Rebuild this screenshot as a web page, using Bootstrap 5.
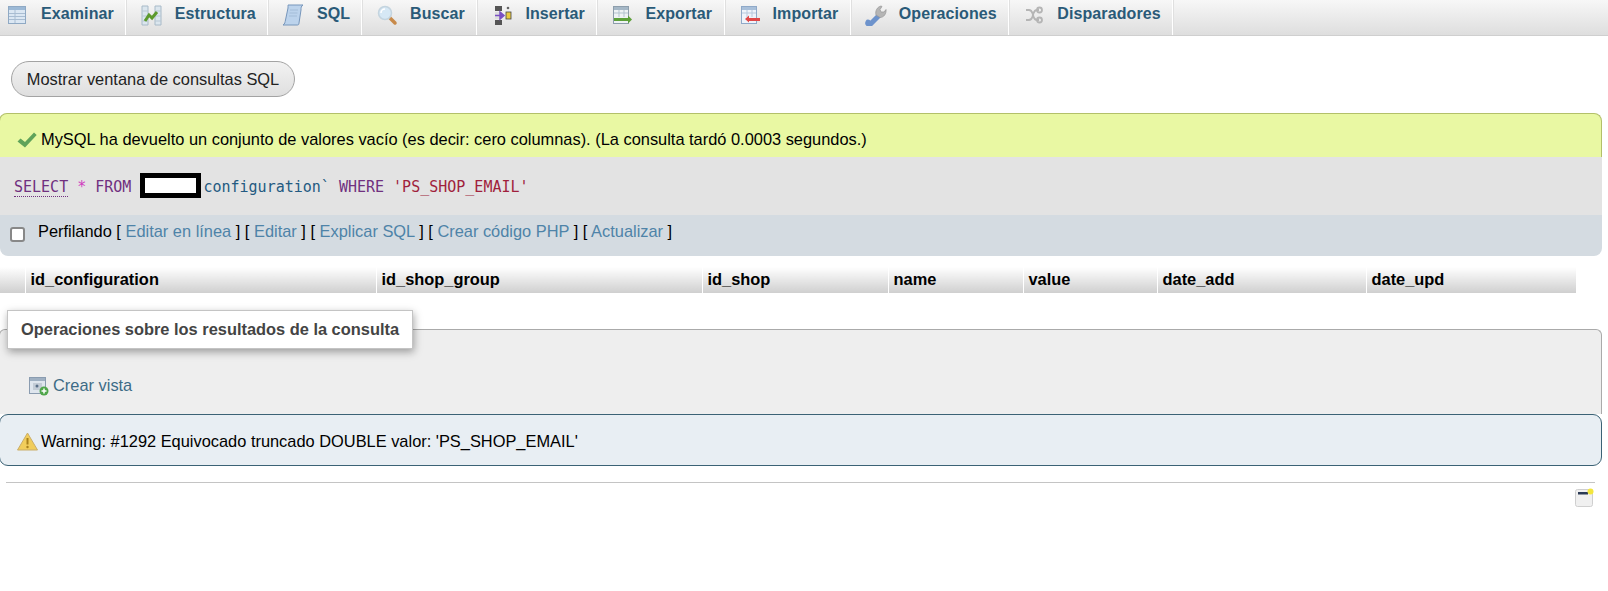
<!DOCTYPE html>
<html lang="es">
<head>
<meta charset="utf-8">
<title>phpMyAdmin</title>
<link rel="stylesheet" href="https://cdn.jsdelivr.net/npm/bootstrap@5.3.0/dist/css/bootstrap.min.css">
<style>
html,body{background:#fff;overflow:hidden}
body{font-family:"Liberation Sans",Arial,sans-serif;font-size:16.4px;color:#000;line-height:1.2}
.tabbar{height:36px;background:linear-gradient(#f7f7f7,#dedede);border-bottom:1px solid #cfcfcf}
.tabitem{height:35px;padding:0 11px 7px 14px;gap:13px;border-right:1px solid #fff;box-shadow:1px 0 0 #e0e0e0;color:#2a5a78;font-weight:700;font-size:16px;text-decoration:none;letter-spacing:.1px}
.tabitem:nth-child(n+4){gap:12px;padding-right:11.5px}
.tabitem:first-child{margin-left:-8px}
.tabitem svg{width:22px;height:22px;flex:none;margin-top:2px}
.sqlbtn{margin:25px 0 16px 11px;width:284px;height:36px;padding:0;border:1px solid #a3a3a3;border-radius:18px;background:linear-gradient(#f2f2f2,#dfdfdf);color:#222;font-size:16.4px}
.msgok{height:44px;margin-left:-1px;padding:9px 17px 0;gap:4px;background:#e9f8a3;border:1px solid #b3c06a;border-bottom:0;border-radius:8px 8px 0 0;margin-right:6px}
.sqlrow{height:58px;background:#e3e3e3;margin-right:6px;padding:3px 0 0 14px;font:15px/55px "DejaVu Sans Mono","Liberation Mono",monospace;white-space:pre;color:#235a81}
.kw{color:#70307f}
.kwsel{color:#70307f;border-bottom:1px dotted #70307f}
.star{color:#d040c0}
.str{color:#a01f3c}
.maskbox{width:61px;height:25px;background:#fff;border:5px solid #000;margin-right:2px;vertical-align:-6px}
.toolrow{height:41px;background:#d4dbe1;margin-right:6px;padding:0 0 8px 10px;border-radius:0 0 8px 8px;gap:13px}
.toolrow a{color:#4e83a8;text-decoration:none}
.toolrow .form-check-input{width:15px;height:15px;margin:5px 0 0;border:2px solid #888;border-radius:3px;flex:none}
.headgrid{width:1576px;margin:11px 0 0;table-layout:fixed;border-collapse:collapse}
.headgrid th{height:26px;padding:0 0 1px 5px;border:0;border-left:1px solid #fff;background:linear-gradient(#fff,#cfcfcf);font-size:16.4px;font-weight:700;color:#000;box-shadow:none;vertical-align:middle}
.headgrid th:first-child{border-left:0}
.opsbox{margin:36px 6px 0 -1px;height:85px;background:#eee;border:1px solid #aaa;border-bottom:0;border-radius:6px 6px 0 0;position:relative;padding:46px 0 0 29px;gap:4px;color:#235a81}
.opslegend{position:absolute;left:7px;top:-20px;width:406px;height:39px;background:#fff;border:1px solid #c4c4c4;color:#444;font-weight:700;padding:1px 0 0 13px;box-shadow:1px 3px 8px rgba(0,0,0,.35)}
.opsbox a{color:#3d6b86;text-decoration:none}
.msgwarn{height:52px;margin:0 6px 0 -1px;padding:3px 17px 0;gap:3px;background:#e8eef3;border:1px solid #3b6275;border-radius:9px}
.rule{margin:16px 13px 0 6px;height:1px;background:#c4c4c4}
.noteic{margin:5px 14px 0 0}
</style>
</head>
<body>
<nav class="tabbar d-flex">
  <a class="tabitem d-flex align-items-center" href="#"><svg viewBox="0 0 22 22"><rect x="2.500" y="2.500" width="17" height="17" fill="#dbe7f3" stroke="#8fa9c4"/><rect x="3" y="3" width="16" height="3" fill="#9cb9d6"/><path d="M3 9.500h16M3 12.500h16M3 15.500h16M9 6v13" stroke="#a9bdd2"/></svg>Examinar</a>
  <a class="tabitem d-flex align-items-center" href="#"><svg viewBox="0 0 22 22"><path d="M2 2h6v19H2zM15 2h6v19h-6z" fill="#dbe6ee" stroke="#a8bac8"/><path d="M2 7h6M2 12h6M2 17h6M15 7h6M15 12h6M15 17h6" stroke="#b9c8d4"/><path d="M5 17l4-6 3 3 5-6" fill="none" stroke="#5c9a2d" stroke-width="3"/></svg>Estructura</a>
  <a class="tabitem d-flex align-items-center" href="#"><svg viewBox="0 0 22 22"><path d="M6 1h15c-2 1-2 3-2 5l-2 13c0 2-1 2-2 2H1c2-1 2-3 2.500-5L6 4c0-2 0-3 0-3z" fill="#bcd3ec" stroke="#7796bb"/><path d="M8 6h8M7.500 9h8M7 12h8" stroke="#a4bdd8"/></svg>SQL</a>
  <a class="tabitem d-flex align-items-center" href="#"><svg viewBox="0 0 22 22"><path d="M13 13l6 6" stroke="#c88a4a" stroke-width="3.500" stroke-linecap="round"/><circle cx="9" cy="9" r="6.500" fill="#d6e8f5" stroke="#c4d4df" stroke-width="1.500"/><path d="M5 9a4 4 0 0 1 4-4" stroke="#fff" fill="none" stroke-width="1.500"/></svg>Buscar</a>
  <a class="tabitem d-flex align-items-center" href="#"><svg viewBox="0 0 22 22"><path d="M4 2h7v5H4zM4 16h7v5H4z" fill="#555"/><path d="M4 8h7v7H4z" fill="#ddd"/><path d="M4 11.500h8M9 8l4 3.500L9 15z" fill="#7a4fc4" stroke="#7a4fc4" stroke-width="1.500"/><rect x="15" y="8" width="5" height="7" fill="#e8c840" stroke="#444" stroke-width=".8"/><circle cx="17" cy="4" r="1.300" fill="#666"/></svg>Insertar</a>
  <a class="tabitem d-flex align-items-center" href="#"><svg viewBox="0 0 22 22"><rect x="2.500" y="2.500" width="15" height="17" fill="#eef2f5" stroke="#8d9eac"/><rect x="3" y="3" width="14" height="3" fill="#a5b7c6"/><path d="M3 9h14M8 6v7M13 6v7" stroke="#b3c3cf"/><path d="M3 14h14v-2.500l4 4-4 4V17H3z" fill="#5da03a"/></svg>Exportar</a>
  <a class="tabitem d-flex align-items-center" href="#"><svg viewBox="0 0 22 22"><rect x="2.500" y="2.500" width="15" height="17" fill="#eef3fa" stroke="#8fa9c8"/><rect x="3" y="3" width="14" height="3" fill="#a9c0da"/><path d="M3 9h14M8 6v7M13 6v7" stroke="#b7c8dc"/><path d="M21 14H10v-2.500l-4 3.500 4 3.500V17h11z" fill="#e04848"/></svg>Importar</a>
  <a class="tabitem d-flex align-items-center" href="#"><svg viewBox="0 0 22 22"><path d="M3 18c-1 2 1 3 2.500 2l7.500-7.500" stroke="#6d93cc" stroke-width="5" fill="none" stroke-linecap="round"/><path d="M11 11c-1-4 1-8 5-9l1 .5-2 3 1 2.500 3 0 2-2.500c.5 4-2 8-6 8z" fill="#b5b5b5" stroke="#979797" stroke-width=".7"/></svg>Operaciones</a>
  <a class="tabitem d-flex align-items-center" href="#"><svg viewBox="0 0 22 22" fill="none" stroke="#b5b5b5" stroke-width="1.800"><path d="M3 6h3c3 0 3 2 4 5s1 5 4 5h2M3 16h3c3 0 3-2 4-5s1-5 4-5h2"/><circle cx="16.500" cy="6" r="2.500"/><circle cx="16.500" cy="16" r="2.500"/></svg>Disparadores</a>
</nav>

<button type="button" class="btn sqlbtn d-block">Mostrar ventana de consultas SQL</button>

<div class="msgok d-flex align-items-center">
  <svg width="20" height="18" viewBox="0 0 20 18"><path d="M.5 10.500L3.500 7.500l4.500 3.500L17 1.500l2.700 2.500L8 16.500z" fill="#5fa35a"/></svg>
  <span>MySQL ha devuelto un conjunto de valores vacío (es decir: cero columnas). (La consulta tardó 0.0003 segundos.)</span>
</div>
<div class="sqlrow"><span class="kwsel">SELECT</span> <span class="star">*</span> <span class="kw">FROM</span> <span class="maskbox d-inline-block"></span><span>configuration`</span> <span class="kw">WHERE</span> <span class="str">'PS_SHOP_EMAIL'</span></div>
<div class="toolrow d-flex align-items-center">
  <input class="form-check-input" type="checkbox" aria-label="Perfilando">
  <span>Perfilando [ <a href="#">Editar en línea</a> ] [ <a href="#">Editar</a> ] [ <a href="#">Explicar SQL</a> ] [ <a href="#">Crear código PHP</a> ] [ <a href="#">Actualizar</a> ]</span>
</div>

<table class="table headgrid">
  <colgroup><col style="width:25px"><col style="width:351px"><col style="width:326px"><col style="width:186px"><col style="width:135px"><col style="width:134px"><col style="width:209px"><col style="width:210px"></colgroup>
  <thead><tr><th></th><th>id_configuration</th><th>id_shop_group</th><th>id_shop</th><th>name</th><th>value</th><th>date_add</th><th>date_upd</th></tr></thead>
</table>

<div class="opsbox d-flex align-items-start">
  <div class="opslegend d-flex align-items-center">Operaciones sobre los resultados de la consulta</div>
  <svg width="20" height="20" viewBox="0 0 20 20"><rect x=".5" y="1.500" width="16" height="16" fill="#dfe6ee" stroke="#8a9cb0"/><rect x="1" y="2" width="15" height="3" fill="#9fb0c2"/><rect x="4" y="7" width="9" height="7" fill="#c3ccd6"/><circle cx="8" cy="10" r="1.500" fill="#5a6f88"/><circle cx="15" cy="15" r="4.500" fill="#4fa64a"/><path d="M15 12.500v5M12.500 15h5" stroke="#fff" stroke-width="1.500"/></svg>
  <a href="#">Crear vista</a>
</div>
<div class="msgwarn d-flex align-items-center">
  <svg width="21" height="19" viewBox="0 0 21 19"><path d="M10.500 1L20.500 18H.5z" fill="#f1cd5b" stroke="#c9ad6a"/><path d="M10.500 6v6.500" stroke="#a8801c" stroke-width="2"/><circle cx="10.500" cy="15" r="1.200" fill="#a8801c"/></svg>
  <span>Warning: #1292 Equivocado truncado DOUBLE valor: 'PS_SHOP_EMAIL'</span>
</div>
<div class="rule"></div>
<div class="d-flex justify-content-end">
  <svg class="noteic" width="19" height="19" viewBox="0 0 19 19"><rect x=".5" y="1.500" width="17" height="17" rx="2" fill="#f0f0f0" stroke="#cfcfcf"/><rect x="3" y="4" width="10" height="2.500" fill="#2b3a55"/><circle cx="15.500" cy="3.500" r="3" fill="#f3e63d"/></svg>
</div>
<script src="https://cdn.jsdelivr.net/npm/bootstrap@5.3.0/dist/js/bootstrap.bundle.min.js"></script>
</body>
</html>
